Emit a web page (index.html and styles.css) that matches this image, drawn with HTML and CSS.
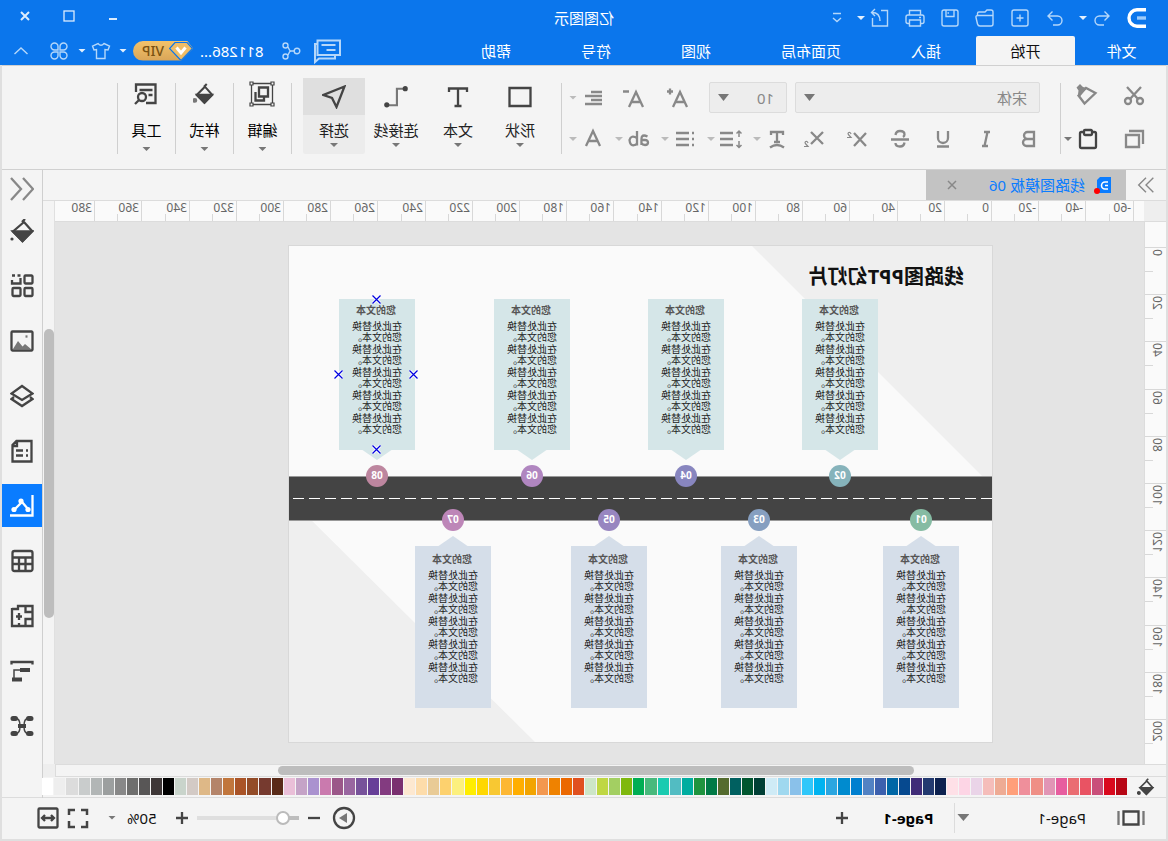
FILE: index.html
```html
<!DOCTYPE html>
<html lang="zh-CN">
<head>
<meta charset="utf-8">
<title>亿图图示</title>
<link rel="stylesheet" href="styles.css">
</head>
<body>
<div class="app">
  <header class="header">
    <div class="titlebar">
      <svg class="logo" viewBox="0 0 20 22" width="20" height="22"><path d="M1 2.800H10a8 8.200 0 0 1 0 16.400H1" fill="none" stroke="#fff" stroke-width="3.400"/><path d="M1 11h9" stroke="#9ccbfb" stroke-width="3.400"/></svg>
      <div class="quick">
        <button class="q q-undo" aria-label="撤销"><svg class="ic" viewBox="0 0 24 24"><path d="M9.500 5.500 5 10l4.500 4.500M5 10h9.500a4.500 4.500 0 0 1 0 9H10"/></svg></button>
        <span class="caret"></span>
        <button class="q" aria-label="重做"><svg class="ic" viewBox="0 0 24 24"><path d="M14.500 5.500 19 10l-4.500 4.500M19 10H9.500a4.500 4.500 0 0 0 0 9H14"/></svg></button>
        <button class="q" aria-label="新建"><svg class="ic" viewBox="0 0 24 24"><rect x="4" y="4" width="16" height="16" rx="2"/><path d="M12 8.500v7M8.500 12h7"/></svg></button>
        <button class="q" aria-label="打开"><svg class="ic" viewBox="0 0 24 24"><path d="M4 18V6q0-2 2-2h4l2 2h6q1.500 0 1.500 1.500V9M4 9.500h15q2.500 0 2 2l-1.500 6.500q-.5 2-2.500 2H6q-2 0-2-2z"/></svg></button>
        <button class="q" aria-label="保存"><svg class="ic" viewBox="0 0 24 24"><rect x="4" y="4" width="16" height="16" rx="2"/><path d="M8 4v6.500h8V4M13 7h1.500"/></svg></button>
        <button class="q" aria-label="打印"><svg class="ic" viewBox="0 0 24 24"><path d="M6.500 9V4.500h11V9M6.500 17.500H5q-2 0-2-2V11q0-2 2-2h14q2 0 2 2v4.500q0 2-2 2h-1.500M6.500 14h11v6h-11zM6 11.500h2"/></svg></button>
        <button class="q" aria-label="导出"><svg class="ic" viewBox="0 0 24 24"><path d="M11 4.500H4.500v15.500h15V12M17 3l3.500 3.500L17 10M20 6.500q-8 0-8 8.500"/></svg></button>
        <span class="caret"></span>
        <button class="q q-more" aria-label="更多"><svg class="ic" viewBox="0 0 24 24"><path d="M8 7.500h8M8 12l4 3.500 4-3.500"/></svg></button>
      </div>
      <h1 class="apptitle">亿图图示</h1>
      <div class="winctl">
        <button aria-label="最小化"><svg viewBox="0 0 12 12"><path d="M2 9h8" stroke-width="2"/></svg></button>
        <button aria-label="最大化"><svg viewBox="0 0 12 12"><rect x="1" y="1" width="10" height="10"/></svg></button>
        <button aria-label="关闭"><svg viewBox="0 0 12 12"><path d="m2 2 8 8M10 2l-8 8" stroke-width="2"/></svg></button>
      </div>
    </div>
    <div class="menubar">
      <nav class="menus">
        <button class="menu m-file">文件</button>
        <button class="menu m-home">开始</button>
        <button class="menu m-insert">插入</button>
        <button class="menu m-layout">页面布局</button>
        <button class="menu m-view">视图</button>
        <button class="menu m-sym">符号</button>
        <button class="menu m-help">帮助</button>
      </nav>
      <div class="account">
        <button aria-label="消息"><svg class="ic ic28" viewBox="0 0 28 28"><path d="M2 3.500h22.500V18H2zM24.500 7H27v18l-4-3.500H7V18M6.500 8h14M6.500 13h9" stroke-width="2"/></svg></button>
        <button class="share" aria-label="分享"><svg class="ic ic20" viewBox="0 0 20 20"><circle cx="4" cy="10" r="2.800"/><circle cx="15.500" cy="4.500" r="2.500"/><circle cx="15.500" cy="15.500" r="2.500"/><path d="M6.800 10h3.200q1 0 1.500-1l1.500-3M10 10q1 0 1.500 1l1.500 3"/></svg></button>
        <span class="user">811286...</span>
        <span class="vip"><svg viewBox="0 0 24 20" width="24" height="20"><path d="M6 1.500h12l5.500 6L12 19.500.5 7.500z" fill="#f0bd66" stroke="#0b76ec" stroke-width="1.200"/><path d="M7.500 6.500 12 12l4.500-5.500" fill="none" stroke="#fff" stroke-width="3"/></svg><b>VIP</b></span>
        <span class="caret"></span>
        <button class="shirt" aria-label="皮肤"><svg class="ic ic20" viewBox="0 0 20 20"><path d="M7 2.500 1.500 5l1.500 4 3-.5v9h8.500v-9l2.500.5 1.500-4L13 2.500Q10 6 7 2.500z"/></svg></button>
        <span class="caret"></span>
        <button class="apps" aria-label="应用"><svg class="ic ic20" viewBox="0 0 20 20"><path d="M9 9H5.500A3.500 3.500 0 1 1 9 5.500zM11 9V5.500A3.500 3.500 0 1 1 14.500 9zM9 11v3.500A3.500 3.500 0 1 1 5.500 11zM11 11h3.500a3.500 3.500 0 1 1-3.500 3.500z"/></svg></button>
        <button class="fold" aria-label="收起"><svg class="ic ic20" viewBox="0 0 20 20"><path d="m3.500 13 6.500-6 6.500 6"/></svg></button>
      </div>
    </div>
  </header>

  <div class="body">
  <section class="ribbon">
    <div class="clip">
      <button aria-label="剪切"><svg class="g" viewBox="0 0 24 24"><circle cx="6" cy="18" r="3"/><circle cx="18" cy="18" r="3"/><path d="M19 4 8 16M5 4l11 12"/></svg></button>
      <button aria-label="格式刷"><svg class="g" viewBox="0 0 24 24"><path d="m2.500 10 9.500-5 7.500 7.500-6 8z"/><path d="m11 5 4-1 3-3 3.500 3.500-2 3 .5 4-2 2z" fill="currentColor" stroke="none"/></svg></button>
      <button aria-label="复制"><svg class="g" viewBox="0 0 24 24"><path d="M7 8h13v12H7zM3 17V4h14"/></svg></button>
      <button class="paste" aria-label="粘贴"><svg class="g dark" viewBox="0 0 24 24"><rect x="4" y="5" width="16" height="16" rx="1.500"/><rect x="8" y="3" width="8" height="5" rx="1" fill="#f4f4f4"/></svg><span class="caret c-grey"></span></button>
    </div>
    <i class="sep"></i>
    <div class="format">
      <div class="frow frow1">
        <span class="pick pick-font"><select aria-label="字体"><option>宋体</option></select></span>
        <span class="pick pick-size"><select aria-label="字号"><option>10</option></select></span>
        <button class="w44" aria-label="增大字号"><svg class="g" viewBox="0 0 24 24"><path d="M3 21 10 6l7 15M5.500 16h9M17 5.500h6M20 2.500v6"/></svg></button>
        <button class="w44" aria-label="减小字号"><svg class="g" viewBox="0 0 24 24"><path d="M3 21 10 6l7 15M5.500 16h9M17 5.500h6"/></svg></button>
        <button class="split split-al" aria-label="对齐"><svg class="g" viewBox="0 0 24 24"><path d="M3 6h11M3 10h17M3 14h11M3 18h17"/></svg><span class="caret c-pale"></span></button>
      </div>
      <div class="frow">
        <button class="w43" aria-label="加粗"><svg class="g" viewBox="0 0 24 24"><path d="M7 5h6.500a3.500 3.500 0 0 1 0 7H7zM7 12h7.500a3.500 3.500 0 0 1 0 7H7z"/></svg></button>
        <button class="w43" aria-label="斜体"><svg class="g" viewBox="0 0 24 24"><path d="M8 5h6M10 19h6M10.500 5l3 14"/></svg></button>
        <button class="w43" aria-label="下划线"><svg class="g" viewBox="0 0 24 24"><path d="M7 4v7a5 5 0 0 0 10 0V4M6 19.500h12"/></svg></button>
        <button class="w43" aria-label="删除线"><svg class="g" viewBox="0 0 24 24"><path d="M16.500 8q-.5-4-4.500-4-4.500 0-4.500 3.500 0 1.500 1.500 2.500M7.500 15.500q.5 4 4.500 4 4.500 0 4.500-3.500M3 12.500h18"/></svg></button>
        <button class="w43" aria-label="上标"><svg class="g" viewBox="0 0 24 24"><path d="m3 6 12 13M15 6 3 19"/><path d="M18 7q.5-2 2.200-1.500 1.500.8 0 2.500L18 10.500h4" stroke-width="1.200"/></svg></button>
        <button class="w43" aria-label="下标"><svg class="g" viewBox="0 0 24 24"><path d="m3 5 12 12M15 5 3 17"/><path d="M18 16q.5-2 2.200-1.500 1.500.8 0 2.500L18 19.500h4" stroke-width="1.200"/></svg></button>
        <div class="splits">
          <button class="split" aria-label="文字方向"><svg class="g" viewBox="0 0 24 24"><path d="M6 8V5h12v3M12 5v10M9 15h6M5 20.500q7-5 14 0"/></svg><span class="caret c-pale"></span></button>
          <button class="split" aria-label="行距"><svg class="g" viewBox="0 0 24 24"><path d="M10 6h13M10 12h13M10 18h13" /><path d="M4 4v6M4 14v7M1.500 6.500 4 4l2.500 2.500M1.500 18 4 20.500 6.500 18" stroke-width="1.500"/></svg><span class="caret c-pale"></span></button>
          <button class="split" aria-label="项目符号"><svg class="g" viewBox="0 0 24 24"><path d="M8 6h13M8 12h13M8 18h13M3 6h2M3 12h2M3 18h2"/></svg><span class="caret c-pale"></span></button>
          <button class="split" aria-label="大小写"><svg class="g" viewBox="0 0 24 24"><path d="M3.500 9.500q4-2 5.500 0 .8 1 .5 8.500M9.500 13H6q-3 0-3 2.500t3 2.500q2.500 0 3.500-2M14 4v14.500M14 11q6-3.500 7.500 2-.5 6-4.500 5.200-2 0-3-2"/></svg><span class="caret c-pale"></span></button>
          <button class="split" aria-label="字体颜色"><svg class="g" viewBox="0 0 24 24"><path d="m5 19 7-15 7 15M7.500 14h9"/></svg><span class="caret c-pale"></span></button>
        </div>
      </div>
    </div>
    <i class="sep sep-f"></i>
    <div class="tools">
      <button class="tool"><span class="tic"><svg class="g dark" viewBox="0 0 24 24"><path d="M1.500 3h21v18h-21z"/></svg></span><span>形状</span><span class="caret c-grey"></span></button>
      <button class="tool"><span class="tic"><svg class="g dark" viewBox="0 0 24 24"><path d="M3 7V3.500h18V7M12 3.500v17M8.500 21h7"/></svg></span><span>文本</span><span class="caret c-grey"></span></button>
      <button class="tool"><span class="tic"><svg class="g dark" viewBox="0 0 26 24"><path d="M3 3h9v18h9" stroke="#777"/><circle cx="3" cy="3" r="2.800" fill="currentColor" stroke="none"/><circle cx="23" cy="20.500" r="2.800" fill="currentColor" stroke="none"/></svg></span><span>连接线</span><span class="caret c-grey"></span></button>
      <button class="tool on"><span class="tic"><svg class="g dark" viewBox="0 0 24 24"><path d="M1.500 1.500 22.500 10l-8.500 3-4.500 9z"/></svg></span><span>选择</span><span class="caret c-grey"></span></button>
    </div>
    <i class="sep sep-t"></i>
    <button class="tool tool-b"><span class="tic"><svg class="g dark g26" viewBox="0 0 26 26"><path d="M2.500 2.500h21v21h-21z" stroke-width="1.300"/><path d="M7 6.500h9v9H7zM19.500 11v8.500H11V16" /><path d="M1 1h3v3H1zM22 1h3v3h-3zM1 22h3v3H1zM22 22h3v3h-3z" fill="#f4f4f4" stroke-width="1.200"/></svg></span><span>编辑</span><span class="caret c-grey"></span></button>
    <i class="sep"></i>
    <button class="tool tool-b"><span class="tic"><svg class="g dark g22" viewBox="0 0 24 24"><path d="m9 1 3 3M11 4l9 9-8.500 8.500L3 13z"/><path d="M3.500 13h16l-8 8.500z" fill="currentColor"/><circle cx="22" cy="19" r="1.500" fill="#777" stroke="#777"/></svg></span><span>样式</span><span class="caret c-grey"></span></button>
    <i class="sep"></i>
    <button class="tool tool-b"><span class="tic"><svg class="g dark" viewBox="0 0 24 24"><path d="M12 21H2.500V2.500H22V10M5.500 8h13M5.500 13h4" /><circle cx="16" cy="15" r="4"/><path d="m19 18 4 4"/></svg></span><span>工具</span><span class="caret c-grey"></span></button>
    <i class="sep"></i>
  </section>

  <div class="work">
    <main class="main">
      <div class="tabs">
        <button class="expand" aria-label="展开"><svg class="g" viewBox="0 0 24 24"><path d="m4 4 8 8-8 8M12 4l8 8-8 8" stroke-width="1.500"/></svg></button>
        <div class="tab">
          <svg viewBox="0 0 18 18" width="18" height="18"><path d="M1 1h11l3 3v13H1z" fill="#0a7cff"/><path d="M4 6h3a3 3 0 0 1 0 7H4M4 9.500h3" fill="none" stroke="#fff" stroke-width="1.600"/><circle cx="15" cy="15" r="3" fill="#f00"/></svg>
          <span>线路图模板 06</span>
          <button aria-label="关闭标签"><svg class="g x" viewBox="0 0 12 12"><path d="m2 2 8 8M10 2l-8 8" stroke-width="1.500"/></svg></button>
        </div>
      </div>
      <div class="stage">
        <div class="corner"></div>
        <svg class="hruler" id="hruler"></svg>
        <div class="vscroll"><div class="vthumb"></div></div>
        <svg class="vruler" id="vruler"></svg>
        <div class="canvas">
          <div class="page" id="page">
            <svg class="art" viewBox="0 0 703 496">
              <path d="M0 0H240L0 240zM703 252V496H457z" fill="#efefef"/>
              <path d="M0 230.500H703M0 274.500H703" stroke="#999"/>
              <path d="M0 231H703V274H0z" fill="#444"/>
              <path d="M0 252.500H703" stroke="#fff" stroke-dasharray="11 5"/>
            </svg>
            <h2 class="slidetitle">线路图PPT幻灯片</h2>
          </div>
        </div>
        <div class="hcorner"></div>
        <div class="hscroll"><div class="hthumb"></div></div>
      </div>
      <div class="palette">
        <svg class="g dark g18" viewBox="0 0 24 24"><path d="m9 1 3 3M11 4l9 9-8.500 8.500L3 13z"/><path d="M3.500 13h16l-8 8.500z" fill="currentColor"/><circle cx="21.500" cy="20" r="1.500" fill="currentColor"/></svg>
        <div class="swatches" id="swatches"></div>
      </div>
    </main>
    <aside class="side">
      <button class="shut" aria-label="收起面板"><svg class="g" viewBox="0 0 24 24"><path d="M11 1 1 12l10 11M23 1 13 12l10 11"/></svg></button>
      <button aria-label="填充"><svg class="g dark" viewBox="0 0 24 24"><path d="m9 0 3 3M10 3l11 9.500-9.500 9.500L2 12z"/><path d="M2 12.500h19l-9.500 9.500z" fill="currentColor"/><circle cx="22" cy="20" r="1.600" fill="currentColor" stroke="none"/></svg></button>
      <button aria-label="符号库"><svg class="g dark" viewBox="0 0 24 24"><rect x="1.500" y="1.500" width="8" height="8" rx="1"/><path d="M13.500 4v5.500H22V6M13.500 1.500h3M19 1.500h3"/><rect x="1.500" y="14" width="8" height="8" rx="1"/><rect x="13.500" y="14" width="8" height="8" rx="1"/></svg></button>
      <button aria-label="图片"><svg class="g dark" viewBox="0 0 24 24"><rect x="1.500" y="2.500" width="21" height="19" rx="1"/><path d="m3 20 6-5 2.500 2.500L16 12l5 8z" fill="#777" stroke="none"/><path d="M6.500 7.500h2" stroke="#777"/></svg></button>
      <button aria-label="图层"><svg class="g dark" viewBox="0 0 24 24"><path d="m12 2 10.500 7.500L12 16 1.500 9.500zM4 13l-2.500 2L12 22l10.500-7L20 13"/></svg></button>
      <button aria-label="文档"><svg class="g dark" viewBox="0 0 24 24"><path d="M2.500 2h15l4 4v16.500h-19zM17 2v5h4M6 11.500h2M11 11.500h7M6 16.500h2M11 16.500h7"/></svg></button>
      <button class="on" aria-label="图表"><svg class="g" viewBox="0 0 24 24"><path d="M1.500 1v20.500H24M6 15l6-7 7 7"/><circle cx="6" cy="15.500" r="2.600" fill="#fff" stroke="none"/><circle cx="13" cy="7" r="2.600" fill="#fff" stroke="none"/><circle cx="20" cy="15.500" r="2.600" fill="#fff" stroke="none"/></svg></button>
      <button aria-label="表格"><svg class="g dark" viewBox="0 0 24 24"><rect x="1.500" y="2" width="20" height="20" rx="2"/><path d="M2 8.500h19M2 15h19M8.500 9v13M15 9v13"/></svg></button>
      <button aria-label="平面图"><svg class="g dark" viewBox="0 0 24 24"><path d="M22 5h-6V2H1.500v20H22V4M8.500 2v6H2M2 15h6.500v7M8.500 15H5M15 9v7M12 12.500h6M15 22v-3"/></svg></button>
      <button aria-label="甘特图"><svg class="g dark" viewBox="0 0 24 24"><path d="M1.500 5.500V3h21v2.500"/><path d="M4 11h10M12 20.500h10" stroke-width="3.800"/><path d="M12 11h8v8" stroke-width="1.500"/></svg></button>
      <button aria-label="思维导图"><svg class="g dark" viewBox="0 0 24 24"><path d="M3 4.500h2.500M18.500 4.500h2.500M3 19.500h2.500M18.500 19.500h2.500" stroke-width="5" stroke-linecap="round"/><path d="M6 4.500q4 0 4 7.500t-4 7.500M18 4.500q-4 0-4 7.500t4 7.500" stroke-width="1.500"/><path d="M8 12h8" stroke-width="4"/></svg></button>
    </aside>
  </div>

  <footer class="status">
    <button class="outline" aria-label="页面缩略图"><svg class="g dark wide" viewBox="0 0 28 20"><path d="M1.500 3v14M26.500 3v14" stroke="#777"/><path d="M6.500 3.500h15v13h-15z"/></svg></button>
    <button class="pagesel">Page-1<span class="caret big"></span></button>
    <button class="pagetab">Page-1</button>
    <button class="addpage" aria-label="新增页面"><svg class="g dark s14" viewBox="0 0 14 14"><path d="M7 1v12M1 7h12"/></svg></button>
    <div class="zoom">
      <button aria-label="播放"><svg class="g dark" viewBox="0 0 24 24"><circle cx="12" cy="12" r="10"/><path d="m9 7 8 5-8 5z" fill="#777" stroke="none"/></svg></button>
      <button class="minus" aria-label="缩小"><svg class="g dark s14" viewBox="0 0 14 14"><path d="M1 7h12"/></svg></button>
      <input type="range" min="0" max="100" value="10" aria-label="缩放">
      <button class="plus" aria-label="放大"><svg class="g dark s14" viewBox="0 0 14 14"><path d="M7 1v12M1 7h12"/></svg></button>
      <button class="pct">50%<span class="caret c-grey"></span></button>
      <button class="full" aria-label="全屏"><svg class="g dark" viewBox="0 0 24 24"><path d="M3 9V4h6M15 4h6v5M21 15v6h-6M9 21H3v-6" stroke-width="2.500"/></svg></button>
      <button class="fit" aria-label="适合宽度"><svg class="g dark" viewBox="0 0 24 24"><rect x="2.500" y="2.500" width="19" height="19" rx="1"/><path d="M6 12h12M9 9l-3 3 3 3M15 9l3 3-3 3"/></svg></button>
    </div>
  </footer>
  </div>
</div>
<script src="app.js"></script>
</body>
</html>
```
FILE: styles.css
```css
* { box-sizing: border-box; }
body {
  margin: 0;
  font-family: "Noto Sans", "Noto Sans CJK SC", sans-serif;
  font-size: 15px;
  line-height: 20px;
  color: #222;
}
button {
  margin: 0;
  padding: 0;
  border: 0;
  background: none;
  color: inherit;
  font: inherit;
  display: flex;
  align-items: center;
  justify-content: center;
}
h1, h2, h3, p { margin: 0; }
svg { display: block; }

/* the whole window is shown as its mirror image */
.app {
  display: flex;
  flex-direction: column;
  min-height: 100vh;
  transform: scaleX(-1);
  background: #f4f4f4;
  overflow: hidden;
}

.caret {
  flex: none;
  width: 8px;
  height: 4px;
  background: #e4f0fd;
  clip-path: polygon(0 0, 100% 0, 50% 100%);
}
.c-grey { background: #777; }
.c-pale { background: #bbb; }
.big { width: 12px; height: 7px; background: #777; }

/* header */
.header { background: #0b76ec; color: #fff; height: 65px; }
.ic { width: 24px; height: 24px; fill: none; stroke: #b5d7fa; stroke-width: 1.4; }
.ic20 { width: 20px; height: 20px; }
.ic28 { width: 28px; height: 28px; }
.titlebar { display: flex; align-items: center; justify-content: space-between; height: 36px; padding: 0 16px 0 21px; position: relative; }
.quick { display: flex; align-items: center; margin-left: 13px; margin-right: auto; }
.q { width: 35px; height: 30px; }
.q-undo { width: 24px; }
.quick .caret { margin: 0 -4px 0 -2px; }
.quick .q-undo + .caret { margin: 0 6px 0 3px; }
.q-more { margin-left: 6px; }
.apptitle { position: absolute; left: 0; right: 0; text-align: center; font-size: 15px; font-weight: 400; pointer-events: none; }
.winctl { display: flex; gap: 26px; padding-bottom: 4px; }
.winctl button { width: 18px; height: 18px; }
.winctl svg { width: 12px; height: 12px; fill: none; stroke: #dcecfd; stroke-width: 1.3; }
.menubar { display: flex; justify-content: space-between; height: 29px; }
.menus { display: flex; }
.menu { height: 29px; width: 100px; }
.m-file { width: 93px; }
.m-home { width: 99px; background: #f4f4f4; color: #111; border-radius: 2px 2px 0 0; }
.m-layout { width: 130px; }
.account { display: flex; align-items: center; padding-right: 11px; }
.share { margin-left: 13px; }
.user { margin-left: 17px; }
.vip {
  display: flex;
  align-items: center;
  width: 60px;
  height: 20px;
  margin: 0 6px 0 7px;
  border-radius: 4px 10px 10px 4px;
  background: linear-gradient(#f3c26a, #d9a558);
  clip-path: polygon(10% 0, 100% 0, 100% 100%, 20% 100%, 0 40%);
  color: #7a5212;
  font-size: 14px;
}
.vip b { margin-left: 5px; font-weight: 500; }
.shirt { margin: 0 5px 0 8px; }
.apps { margin-left: 9px; }
.fold { margin-left: 18px; }

/* everything under the blue header */
.body { flex: 1; display: flex; flex-direction: column; border: solid #dfdfdf; border-width: 0 2px 2px; }
.g { width: 24px; height: 24px; flex: none; fill: none; stroke: currentColor; stroke-width: 2.3; color: #888; }
.dark { color: #444; }
.g18 { width: 18px; height: 18px; }
.g22 { width: 22px; height: 22px; }
.g26 { width: 26px; height: 26px; }
.s14 { width: 14px; height: 14px; }
.wide { width: 28px; height: 20px; }
.x { width: 12px; height: 12px; }

.ribbon { display: flex; height: 105px; border: solid #d0d0d0; border-width: 1px 0; }
.sep { flex: none; width: 1px; height: 71px; margin-top: 17px; background: #cfcfcf; }
.clip { display: grid; grid-template-columns: 48px 48px; grid-template-rows: 24px 24px; row-gap: 20px; padding: 17px 1px 0 8px; }
.paste { justify-content: flex-start; gap: 4px; padding-left: 10px; }
.format { display: flex; flex-direction: column; gap: 15px; padding-top: 16px; margin-left: 9px; }
.frow { display: flex; align-items: center; height: 22px; }
.frow1 { height: 31px; padding-left: 11px; }
.pick { position: relative; height: 31px; }
.pick::after { content: ""; position: absolute; right: 9px; top: 12px; width: 11px; height: 7px; background: #777; clip-path: polygon(0 0, 100% 0, 50% 100%); }
.pick select { width: 100%; height: 31px; padding: 0 12px; border: 1px solid #dcdcdc; border-radius: 2px; background: #ededed; color: #888; font: inherit; appearance: none; }
.pick-font { width: 245px; }
.pick-size { width: 78px; margin: 0 9px 0 8px; }
.w44 { width: 44px; }
.w43 { width: 43px; }
.split { width: 36px; gap: 4px; }
.split-al { margin-left: 7px; }
.splits { display: flex; gap: 10px; margin-left: 4px; }
.sep-f { margin-left: 7px; }
.tools { display: flex; margin: 12px 11px 0 10px; }
.tool { flex-direction: column; justify-content: flex-start; width: 62px; height: 76px; }
.tool > span:nth-child(2) { margin: 5px 0 3px; color: #222; }
.tic { display: flex; align-items: center; justify-content: center; width: 100%; height: 37px; }
.on.tool { background: #ececec; border-radius: 2px; }
.on .tic { background: #dfdfdf; }
.tool-b { width: 57px; margin-top: 9px; }
.tool-b > span:nth-child(2) { margin: 8px 0 7px; color: #000; }

/* document area */
.work { flex: 1; display: flex; }
.main { flex: 1; min-width: 0; display: flex; flex-direction: column; border-right: 1px solid #cfcfcf; }
.tabs { display: flex; height: 31px; border-bottom: 1px solid #dcdcdc; }
.expand { width: 40px; }
.expand .g { width: 22px; height: 22px; }
.tab { display: flex; align-items: center; width: 200px; padding: 0 20px 0 14px; background: #c3c3c3; color: #0a7cff; }
.tab span { margin: 0 auto 0 9px; }
.stage { flex: 1; display: grid; grid-template-columns: 22px 1fr 12px; grid-template-rows: 21px 1fr 13px; }
.corner { background: #eee; border-bottom: 1px solid #dcdcdc; }
.hruler { width: 100%; height: 21px; background: #fafafa; border-bottom: 1px solid #dcdcdc; overflow: visible; }
.vruler { width: 22px; height: 100%; background: #fafafa; border-right: 1px solid #dcdcdc; overflow: visible; }
.hruler line, .vruler line { stroke: #d8d8d8; shape-rendering: crispEdges; }
.hruler text, .vruler text { font-size: 12px; fill: #666; }
.vscroll { grid-row: 1 / 3; grid-column: 3; border-left: 1px solid #e0e0e0; }
.vthumb { width: 10px; height: 289px; margin-top: 128px; border-radius: 5px; background: #bdbdbd; }
.vruler, .canvas { grid-row: 2; }
.vruler { grid-column: 1; }
.canvas { grid-column: 2; padding: 24px 0 0 152px; background: #e4e4e4; overflow: hidden; }
.hcorner { grid-column: 3; grid-row: 3; background: #eee; }
.hscroll { grid-column: 1 / 3; grid-row: 3; padding: 1px 0; border: 1px solid #dcdcdc; border-left: 0; }
.hthumb { width: 636px; height: 9px; margin-left: 252px; border-radius: 5px; background: #bdbdbd; }

/* slide */
.page { position: relative; width: 703px; height: 496px; background: #fafafa; outline: 1px solid #d8d8d8; }
.art { width: 703px; height: 496px; }
.slidetitle { position: absolute; left: 28px; top: 18px; font-size: 20px; line-height: 26px; font-weight: 700; color: #111; white-space: nowrap; }
.card { position: absolute; width: 76px; font-size: 10px; line-height: 11px; color: #222; }
.card::before { content: ""; position: absolute; left: 22px; width: 32px; height: 11px; background: inherit; }
.card.up { top: 53px; height: 151px; padding-top: 6px; background: #d5e6e8; }
.card.up::before { top: 150px; clip-path: polygon(0 0, 100% 0, 50% 100%); }
.card.down { top: 300px; height: 162px; padding-top: 8px; background: #d5dee9; }
.card.down::before { top: -10px; clip-path: polygon(0 100%, 100% 100%, 50% 0); }
.card h3 { margin-bottom: 5px; padding-left: 2px; text-align: center; font-size: 10px; font-weight: 700; color: #555; }
.card p { width: 52px; margin: 0 0 1px 13px; }
.dot { position: absolute; width: 22px; height: 22px; border-radius: 50%; text-align: center; font-size: 10px; line-height: 21px; font-weight: 700; color: #fff; }
.handle { position: absolute; width: 9px; height: 9px; }
.handle path { stroke: #0000e0; stroke-width: 1.2; }
.handle .halo { stroke: #fff; stroke-width: 3; }

.palette { display: flex; align-items: flex-start; height: 21px; padding: 1px 0 0 11px; border-bottom: 1px solid #dcdcdc; }
.swatches { flex: 1; display: flex; gap: 1px; margin-left: 10px; }
.swatches i { flex: 1; height: 17px; }

.side { width: 40px; display: flex; flex-direction: column; gap: 12px; border-bottom: 1px solid #dcdcdc; }
.side button { width: 40px; height: 43px; }
.side .shut { height: 38px; margin-bottom: -11px; }
.side .on { background: #0a7cff; }
.side .on .g { color: #fff; }

/* status bar */
.status { display: flex; align-items: center; height: 41px; padding-bottom: 2px; color: #111; }
.outline { margin-left: 21px; }
.pagesel { margin-left: 31px; padding-right: 2px; height: 30px; gap: 68px; border-right: 1px solid #dcdcdc; }
.pagetab { margin-left: 21px; font-weight: 700; color: #000; }
.addpage { margin-left: 34px; }
.zoom { display: flex; align-items: center; margin-left: auto; padding-right: 34px; }
.minus { margin-left: 11px; }
.plus { margin-left: 8px; }
.pct { margin-left: 18px; gap: 11px; }
.full { margin-left: 18px; }
.fit { margin-left: 6px; }
.zoom input { appearance: none; width: 102px; height: 14px; margin: 0 0 0 8px; background: linear-gradient(#bdbdbd, #bdbdbd) 0 5px / 16px 4px no-repeat, linear-gradient(#dfdfdf, #dfdfdf) 0 5px / 100% 4px no-repeat; }
.zoom input::-webkit-slider-thumb { appearance: none; width: 14px; height: 14px; border: 2px solid #bbb; border-radius: 50%; background: #fff; }
```
FILE: app.js
```js
const NS = 'http://www.w3.org/2000/svg';

function add(parent, tag, attrs, text) {
  const el = document.createElementNS(NS, tag);
  for (const k in attrs) el.setAttribute(k, attrs[k]);
  if (text !== undefined) el.textContent = text;
  parent.appendChild(el);
}

// Rulers: one major tick for every 20 units, with the label after it
const STEP = 47.2;
const h = document.getElementById('hruler');
for (let n = -3; n < 20; n++) {
  const x = Math.round(153 + n * STEP);
  const mid = Math.round(x + STEP / 2);
  add(h, 'line', { x1: x, y1: 0, x2: x, y2: 20 });
  if (n < 19) add(h, 'line', { x1: mid, y1: 13, x2: mid, y2: 20 });
  add(h, 'text', { x: x + 2, y: 11 }, n * 20);
}
const v = document.getElementById('vruler');
for (let n = 0; n < 11; n++) {
  const y = Math.round(25 + n * STEP);
  const mid = Math.round(y + STEP / 2);
  add(v, 'line', { x1: 0, y1: y, x2: 21, y2: y });
  add(v, 'line', { x1: 13, y1: mid, x2: 21, y2: mid });
  add(v, 'text', { transform: `translate(13 ${y + 2}) rotate(-90)`, 'text-anchor': 'end' }, n * 20);
}

// Slide cards and their numbered stops on the road
const cards = [
  ['01', 'down', 33, '#86bba3'], ['02', 'up', 114, '#86b3bb'],
  ['03', 'down', 195, '#869fc0'], ['04', 'up', 268, '#8886bf'],
  ['05', 'down', 345, '#9886c0'], ['06', 'up', 422, '#b086c0'],
  ['07', 'down', 501, '#bd86b8'], ['08', 'up', 577, '#bd869f']
];
const page = document.getElementById('page');
const line = '<p>在此处替换您的文本。</p>';
for (const [num, dir, left, color] of cards) {
  const top = dir === 'up' ? 219 : 263;
  page.insertAdjacentHTML('beforeend',
    `<div class="card ${dir}" style="left:${left}px"><h3>您的文本</h3>${line.repeat(5)}</div>` +
    `<div class="dot" style="left:${left + 27}px;top:${top}px;background:${color}">${num}</div>`);
}
for (const [x, y] of [[611, 49], [574, 124], [649, 124], [611, 199]]) {
  page.insertAdjacentHTML('beforeend',
    `<svg class="handle" style="left:${x}px;top:${y}px" viewBox="0 0 9 9"><path class="halo" d="m.5.5 8 8M8.500.5l-8 8"/><path d="m.5.5 8 8M8.500.5l-8 8"/></svg>`);
}

// Colour strip
const colors = ('b70615 d9091d c94f7a e95363 ea6d72 e75d9f e195b5 ef8f86 ef8f9b ff9f7a eeab94 f5bdba ead4e8 fdd5e5 fee0e7 ' +
  '0d214f 233a70 402c78 06498f 0067a6 3c60ae 5282c3 007fcf 008bcf 2ba6e0 00b3f0 2fc7fa 8ac1ea 9fd8ef cfebf6 ' +
  '003f35 00562f 006060 546b2e 007a46 1f943f 00ada0 52bcc2 1acbb0 48b97c 00ae54 7fb80e a3cf62 bfd743 cde6c7 ' +
  'e0501f eb6800 ef8200 f3984f f2a400 ffae00 fdb733 f8c832 ffd700 ffed00 fcf07e fdd16e e9cb96 fddcaa fde8d0 ' +
  '7a3070 833b80 673f98 77529a 9966a0 9b5789 ca7aae aa92cf c5a3c7 eabfd8 ' +
  '592a18 763a2f 934c28 aa5427 c1763c b4846a deb887 d3cac5 c9d4cb ' +
  '000000 3e3737 585656 6e6e6d 888888 9c9f9f b2b6b6 c9cccc dcdcdc eeeeee ffffff').split(' ');
document.getElementById('swatches').innerHTML = colors.map(c => `<i style="background:#${c}"></i>`).join('');
```
